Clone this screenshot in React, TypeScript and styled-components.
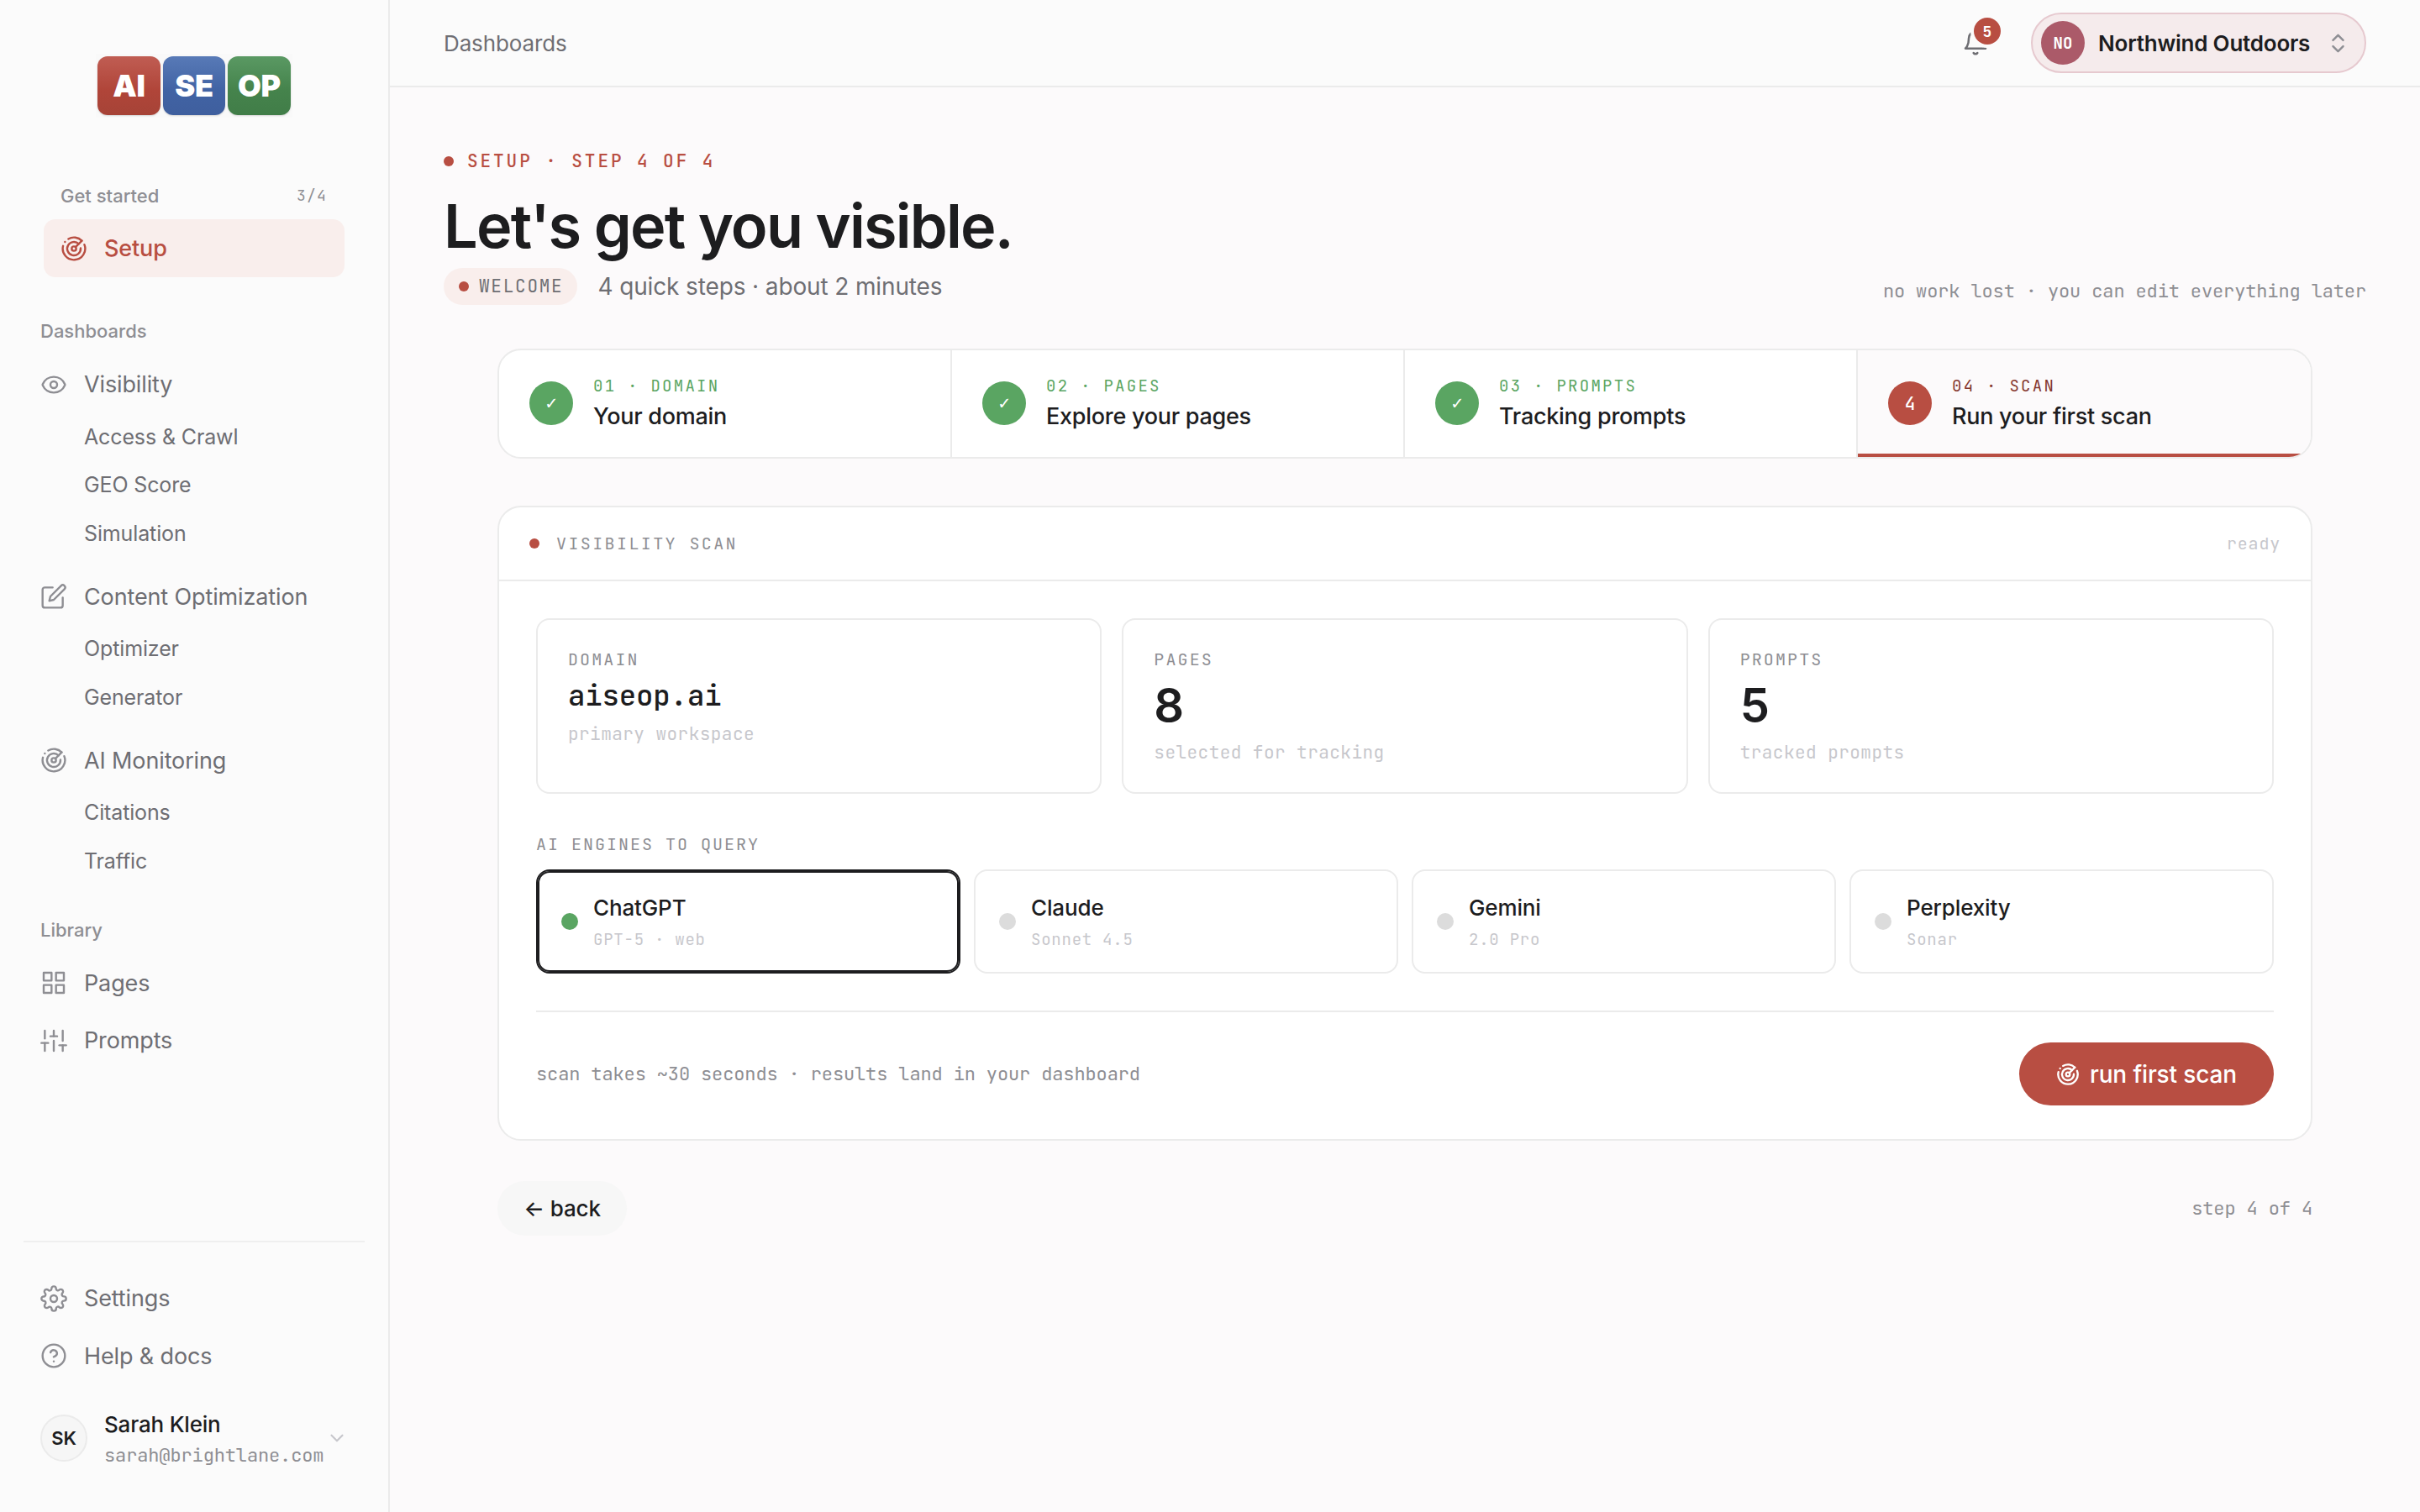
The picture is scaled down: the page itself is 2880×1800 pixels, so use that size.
import React from 'react';
import styled, { createGlobalStyle, css } from 'styled-components';
import { ChevronsUpDown, Eye } from 'lucide-react';
import { FiBell, FiChevronDown, FiEdit, FiGrid, FiHelpCircle, FiSettings, FiSliders } from 'react-icons/fi';

const color = {
  ink: '#1d1d1f',
  text: '#6e6e73',
  muted: '#8e8e93',
  faint: '#c7c7cc',
  line: '#ebebeb',
  chrome: '#fbfbfb',
  canvas: '#fcfafb',
  brand: '#b84e42',
  brandDark: '#86382f',
  brandTint: '#f9eeec',
  green: '#5aa562',
};

const sans = `Inter, 'Liberation Sans', sans-serif`;
const mono = `'JetBrains Mono', 'DejaVu Sans Mono', monospace`;

const GlobalStyle = createGlobalStyle`
  *, *::before, *::after { box-sizing: border-box; }
  html, body { margin: 0; padding: 0; }
  body {
    font-family: ${sans};
    letter-spacing: -0.13px;
    color: ${color.ink};
    background: ${color.canvas};
    -webkit-font-smoothing: antialiased;
  }
  button { font: inherit; letter-spacing: inherit; border: 0; margin: 0; cursor: pointer; }
  h1, p { margin: 0; }
`;

/* Monospaced text: $pitch is the distance from one character to the next. */
const Mono = styled.span<{ $size: number; $pitch: number; $color?: string; $weight?: number; $lh?: number }>`
  display: block;
  font-family: ${mono};
  font-size: ${(p) => p.$size}px;
  font-weight: ${(p) => p.$weight ?? 400};
  letter-spacing: ${(p) => (p.$pitch - p.$size * 0.6).toFixed(3)}px;
  line-height: ${(p) => p.$lh ?? 24}px;
  color: ${(p) => p.$color ?? color.muted};
  white-space: nowrap;
`;

const Dot = styled.span<{ $size?: number; $color?: string }>`
  flex: none;
  width: ${(p) => p.$size ?? 12}px;
  height: ${(p) => p.$size ?? 12}px;
  border-radius: 50%;
  background: ${(p) => p.$color ?? color.brand};
`;

const Shell = styled.div`
  display: grid;
  grid-template-columns: 464px 1fr;
  width: 2880px;
  height: 1800px;
  overflow: hidden;
`;

/* ---------- Sidebar ---------- */

const Sidebar = styled.aside`
  display: flex;
  flex-direction: column;
  background: ${color.chrome};
  border-right: 2px solid ${color.line};
`;

const Logo = styled.div`
  display: flex;
  gap: 3px;
  align-self: flex-start;
  margin: 64px 0 0 114px;
  padding: 2.5px 2px 3.5px 2.2px;
  background: #f9f9f9;
`;

const LogoTile = styled.span<{ $from: string; $mid: string; $to: string }>`
  display: flex;
  align-items: center;
  justify-content: center;
  width: 74.5px;
  height: 70px;
  border-radius: 12px;
  background: linear-gradient(${(p) => p.$from}, ${(p) => p.$mid} 58%, ${(p) => p.$to});
  box-shadow: 0 1px 2px rgba(0, 0, 0, 0.16);
  color: #fff;
  font-size: 36px;
  font-weight: 900;
  letter-spacing: -0.3px;
  line-height: 1;
  padding-top: 1px;
`;

const Started = styled.div`
  display: flex;
  align-items: center;
  justify-content: space-between;
  height: 28px;
  margin: 79px 73px 0 72px;
`;

const SmallLabel = styled.span`
  font-size: 22px;
  font-weight: 500;
  line-height: 28px;
  letter-spacing: 0;
  color: ${color.muted};
`;

const SectionLabel = styled(SmallLabel)<{ $top: number }>`
  display: flex;
  align-items: center;
  height: 57.3px;
  margin-top: ${(p) => p.$top}px;
  padding: 0 0 1px 48px;
`;

const NavItem = styled.a<{ $active?: boolean; $gap?: number }>`
  display: flex;
  align-items: center;
  gap: 20px;
  height: 68.5px;
  margin-top: ${(p) => p.$gap ?? 0}px;
  padding-left: 48px;
  font-size: 27px;
  color: ${color.text};
  white-space: nowrap;

  svg {
    flex: none;
    width: 32px;
    height: 32px;
    color: ${color.muted};
    stroke-width: 1.8;
  }

  ${(p) =>
    p.$active &&
    css`
      height: 69px;
      margin: 14px 52px 0;
      padding-left: 20px;
      border-radius: 14px;
      background: ${color.brandTint};
      color: ${color.brand};
      font-weight: 500;
      svg {
        color: ${color.brand};
      }
    `}
`;

const SubItem = styled.a`
  display: flex;
  align-items: center;
  height: 57.5px;
  padding: 0 0 2px 100px;
  font-size: 25px;
  color: ${color.text};
`;

const SidebarFoot = styled.div`
  margin: auto 28px 0;
  padding: 32.5px 0 56px;
  border-top: 2px solid #efefef;

  ${NavItem} {
    padding-left: 20px;
  }
`;

const User = styled.div`
  display: flex;
  align-items: center;
  height: 64px;
  margin-top: 31.5px;
  padding-left: 20px;

  > svg {
    margin-left: 3px;
    width: 26px;
    height: 26px;
    color: ${color.faint};
  }
`;

const UserAvatar = styled.span`
  display: flex;
  align-items: center;
  justify-content: center;
  width: 56px;
  height: 56px;
  border: 2px solid ${color.line};
  border-radius: 50%;
  background: #f6f6f6;
  font-size: 22px;
  font-weight: 600;
`;

const UserText = styled.div`
  margin-left: 20px;
  padding-top: 2px;
`;

const UserName = styled.div`
  margin-bottom: 3px;
  font-size: 26px;
  font-weight: 500;
  line-height: 36px;
  letter-spacing: -0.2px;
`;

/* ---------- Top bar ---------- */

const Main = styled.main`
  display: flex;
  flex-direction: column;
  min-width: 0;
`;

const TopBar = styled.header`
  display: flex;
  align-items: center;
  height: 104px;
  padding: 0 64px;
  background: ${color.chrome};
  border-bottom: 2px solid ${color.line};
`;

const Crumb = styled.span`
  font-size: 26px;
  color: ${color.text};
  margin-right: auto;
`;

const BellButton = styled.span`
  position: relative;
  display: flex;
  margin-right: 50px;
  color: ${color.text};
`;

const Badge = styled.span`
  position: absolute;
  top: -14px;
  left: 14px;
  display: flex;
  align-items: center;
  justify-content: center;
  width: 32px;
  height: 32px;
  padding-top: 1px;
  border-radius: 50%;
  background: ${color.brand};
  box-shadow: 0 0 0 4px ${color.chrome};
`;

const Workspace = styled.div`
  display: flex;
  align-items: center;
  width: 399px;
  height: 72px;
  padding: 0 17.5px 0 10px;
  border: 2px solid #e6c9cf;
  border-radius: 36px;
  background: #f5ebec;
  font-size: 26px;
  font-weight: 600;
  letter-spacing: -0.22px;

  > svg {
    margin-left: auto;
    color: ${color.muted};
  }
`;

const WorkspaceAvatar = styled.span`
  display: flex;
  align-items: center;
  justify-content: center;
  width: 52px;
  height: 52px;
  margin-right: 16px;
  padding-top: 1px;
  border-radius: 50%;
  background: #ab5a69;
`;

/* ---------- Page heading ---------- */

const Page = styled.div`
  display: flex;
  flex-direction: column;
  padding: 76px 64px 0;
`;

const Eyebrow = styled.div`
  display: flex;
  align-items: center;
  gap: 16px;
  height: 24px;
`;

const Title = styled.h1`
  margin-top: 22px;
  font-size: 72px;
  font-weight: 600;
  line-height: 86px;
  letter-spacing: -1.8px;
`;

const SubRow = styled.div`
  display: flex;
  align-items: center;
  height: 44px;
  margin-top: 7px;
`;

const Welcome = styled.span`
  display: flex;
  align-items: center;
  gap: 12px;
  height: 44px;
  padding: 0 17px 0 18px;
  border-radius: 22px;
  background: ${color.brandTint};
`;

const Lead = styled.p`
  margin-left: 24px;
  font-size: 28px;
  color: ${color.text};
`;

const Note = styled.div`
  margin-left: auto;
  padding-top: 11px;
`;

/* ---------- Stepper ---------- */

const Column = styled.div`
  display: flex;
  flex-direction: column;
  width: 2160px;
  margin: 52px auto 0;
`;

const Stepper = styled.div`
  display: grid;
  grid-template-columns: repeat(4, 1fr);
  height: 131px;
  border: 2px solid ${color.line};
  border-radius: 28px;
  background: #fff;
  overflow: hidden;
`;

const Step = styled.div<{ $active?: boolean }>`
  display: flex;
  align-items: center;
  gap: 24px;
  padding: 0 0 1px 36px;
  border-right: 2px solid ${color.line};
  ${(p) =>
    p.$active &&
    css`
      border-right: 0;
      background: ${color.canvas};
      box-shadow: inset 0 -4px 0 ${color.brand};
    `}
`;

const StepMark = styled.span<{ $active?: boolean }>`
  display: flex;
  align-items: center;
  justify-content: center;
  width: 52px;
  height: 52px;
  border-radius: 50%;
  background: ${(p) => (p.$active ? color.brand : color.green)};
  color: #fff;
  font-family: ${mono};
  font-size: ${(p) => (p.$active ? 21 : 22)}px;
  font-weight: ${(p) => (p.$active ? 500 : 400)};
  line-height: 1;
`;

const StepText = styled.div`
  padding-top: 2px;
`;

const StepTitle = styled.div`
  margin-top: 6px;
  font-size: 27px;
  font-weight: 500;
  line-height: 36px;
  letter-spacing: -0.27px;
  white-space: nowrap;
`;

/* ---------- Scan panel ---------- */

const Panel = styled.section`
  height: 756px;
  margin-top: 56px;
  border: 2px solid ${color.line};
  border-radius: 28px;
  background: #fff;
`;

const PanelHead = styled.div`
  display: flex;
  align-items: center;
  height: 88px;
  padding: 0 36px;
  border-bottom: 2px solid ${color.line};

  ${Dot} {
    margin-right: 20px;
  }
  > :last-child {
    margin-left: auto;
  }
`;

const PanelBody = styled.div`
  padding: 44px 44px 0;
`;

const Stats = styled.div`
  display: grid;
  grid-template-columns: repeat(3, 1fr);
  gap: 24px;
`;

const Stat = styled.div`
  height: 209px;
  padding: 35px 36px 0;
  border: 2px solid ${color.line};
  border-radius: 16px;
`;

const StatNumber = styled.div`
  margin: 11.5px 0 13px;
  font-size: 56px;
  font-weight: 600;
  line-height: 62px;
`;

const StatDomain = styled.div`
  margin: 11px 0 13.5px;
`;

const EnginesLabel = styled.div`
  margin: 48px 0 18px;
`;

const Engines = styled.div`
  display: grid;
  grid-template-columns: repeat(4, 1fr);
  gap: 16px;
`;

const Engine = styled.div<{ $on?: boolean }>`
  display: flex;
  align-items: center;
  gap: 18px;
  height: 124px;
  padding: 0 28px;
  border: 2px solid ${(p) => (p.$on ? color.ink : color.line)};
  border-radius: 16px;
  box-shadow: ${(p) => (p.$on ? `inset 0 0 0 2px ${color.ink}` : 'none')};
`;

const EngineName = styled.div`
  margin-bottom: 8.5px;
  padding-top: 1px;
  font-size: 26px;
  font-weight: 500;
  line-height: 34px;
`;

const PanelFoot = styled.div`
  display: flex;
  align-items: center;
  justify-content: space-between;
  margin-top: 44px;
  padding-top: 36px;
  border-top: 2px solid ${color.line};
`;

const RunButton = styled.button`
  display: flex;
  align-items: center;
  justify-content: center;
  gap: 12px;
  width: 303px;
  height: 75px;
  padding: 0;
  border-radius: 38px;
  background: ${color.brand};
  color: #fff;
  font-size: 28px;
  font-weight: 500;

  svg {
    width: 28px;
    height: 28px;
  }
`;

const BottomRow = styled.div`
  display: flex;
  align-items: center;
  justify-content: space-between;
  margin-top: 48px;
`;

const BackButton = styled.button`
  width: 154px;
  height: 65px;
  padding: 0;
  border-radius: 33px;
  background: #f7f7f7;
  color: ${color.ink};
  font-size: 26px;
  font-weight: 500;
`;

const RadarIcon = () => (
  <svg viewBox="0 0 24 24" fill="none" stroke="currentColor" strokeWidth={2} strokeLinecap="round" strokeLinejoin="round">
    <path d="M19.07 4.93A10 10 0 0 0 6.99 3.34" />
    <path d="M4 6h.01" />
    <path d="M2.29 9.62A10 10 0 1 0 21.31 8.35" />
    <path d="M16.24 7.76A6 6 0 1 0 17.99 11.66" />
    <circle cx="12" cy="12" r="2" />
    <path d="m13.41 10.59 5.66-5.66" />
  </svg>
);

const steps = [
  { tag: '01 · DOMAIN', title: 'Your domain' },
  { tag: '02 · PAGES', title: 'Explore your pages' },
  { tag: '03 · PROMPTS', title: 'Tracking prompts' },
  { tag: '04 · SCAN', title: 'Run your first scan', active: true },
];

const engines = [
  { name: 'ChatGPT', model: 'GPT-5 · web', on: true },
  { name: 'Claude', model: 'Sonnet 4.5' },
  { name: 'Gemini', model: '2.0 Pro' },
  { name: 'Perplexity', model: 'Sonar' },
];

const nav = [
  { icon: <Eye />, label: 'Visibility', children: ['Access & Crawl', 'GEO Score', 'Simulation'] },
  { icon: <FiEdit />, label: 'Content Optimization', children: ['Optimizer', 'Generator'] },
  { icon: <RadarIcon />, label: 'AI Monitoring', children: ['Citations', 'Traffic'] },
];

export default function App() {
  return (
    <>
      <GlobalStyle />
      <Shell>
        <Sidebar>
          <Logo>
            <LogoTile $from="#c05d53" $mid="#b04539" $to="#a64337">AI</LogoTile>
            <LogoTile $from="#587ab7" $mid="#4163a4" $to="#3f5f9e">SE</LogoTile>
            <LogoTile $from="#5a9963" $mid="#45834c" $to="#417d48">OP</LogoTile>
          </Logo>
          <Started>
            <SmallLabel>Get started</SmallLabel>
            <Mono $size={18} $pitch={12}>3/4</Mono>
          </Started>
          <NavItem $active>
            <RadarIcon />
            Setup
          </NavItem>
          <SectionLabel $top={36}>Dashboards</SectionLabel>
          {nav.map((group, i) => (
            <React.Fragment key={group.label}>
              <NavItem $gap={i ? 11.7 : 0}>
                {group.icon}
                {group.label}
              </NavItem>
              {group.children.map((c) => (
                <SubItem key={c}>{c}</SubItem>
              ))}
            </React.Fragment>
          ))}
          <SectionLabel $top={24}>Library</SectionLabel>
          <NavItem>
            <FiGrid />
            Pages
          </NavItem>
          <NavItem>
            <FiSliders />
            Prompts
          </NavItem>
          <SidebarFoot>
            <NavItem>
              <FiSettings />
              Settings
            </NavItem>
            <NavItem>
              <FiHelpCircle />
              Help &amp; docs
            </NavItem>
            <User>
              <UserAvatar>SK</UserAvatar>
              <UserText>
                <UserName>Sarah Klein</UserName>
                <Mono $size={22} $pitch={13.07} $lh={32}>sarah@brightlane.com</Mono>
              </UserText>
              <FiChevronDown />
            </User>
          </SidebarFoot>
        </Sidebar>

        <Main>
          <TopBar>
            <Crumb>Dashboards</Crumb>
            <BellButton>
              <FiBell size={32} strokeWidth={1.9} />
              <Badge>
                <Mono $size={18} $pitch={10.8} $color="#fff" $weight={700}>5</Mono>
              </Badge>
            </BellButton>
            <Workspace>
              <WorkspaceAvatar>
                <Mono $size={19} $pitch={11.4} $color="#fff" $weight={600}>NO</Mono>
              </WorkspaceAvatar>
              Northwind Outdoors
              <ChevronsUpDown size={29} />
            </Workspace>
          </TopBar>

          <Page>
            <Eyebrow>
              <Dot />
              <Mono $size={21} $pitch={15.54} $color={color.brand} $weight={500}>SETUP · STEP 4 OF 4</Mono>
            </Eyebrow>
            <Title>Let's get you visible.</Title>
            <SubRow>
              <Welcome>
                <Dot />
                <Mono $size={21} $pitch={14.35} $color={color.text}>WELCOME</Mono>
              </Welcome>
              <Lead>4 quick steps · about 2 minutes</Lead>
              <Note>
                <Mono $size={22} $pitch={13.07}>no work lost · you can edit everything later</Mono>
              </Note>
            </SubRow>

            <Column>
              <Stepper>
                {steps.map((s) => (
                  <Step key={s.tag} $active={s.active}>
                    <StepMark $active={s.active}>{s.active ? '4' : '✓'}</StepMark>
                    <StepText>
                      <Mono $size={19} $pitch={13.68} $color={s.active ? color.brandDark : color.green}>
                        {s.tag}
                      </Mono>
                      <StepTitle>{s.title}</StepTitle>
                    </StepText>
                  </Step>
                ))}
              </Stepper>

              <Panel>
                <PanelHead>
                  <Dot />
                  <Mono $size={20} $pitch={14.4}>VISIBILITY SCAN</Mono>
                  <Mono $size={20} $pitch={12.8} $color={color.faint}>ready</Mono>
                </PanelHead>
                <PanelBody>
                  <Stats>
                    <Stat>
                      <Mono $size={20} $pitch={14.1}>DOMAIN</Mono>
                      <StatDomain>
                        <Mono $size={34} $pitch={20.27} $color={color.ink} $lh={40} $weight={500}>aiseop.ai</Mono>
                      </StatDomain>
                      <Mono $size={21} $pitch={13.06} $color={color.faint}>primary workspace</Mono>
                    </Stat>
                    <Stat>
                      <Mono $size={20} $pitch={14.1}>PAGES</Mono>
                      <StatNumber>8</StatNumber>
                      <Mono $size={21} $pitch={13.06} $color={color.faint}>selected for tracking</Mono>
                    </Stat>
                    <Stat>
                      <Mono $size={20} $pitch={14.1}>PROMPTS</Mono>
                      <StatNumber>5</StatNumber>
                      <Mono $size={21} $pitch={13.06} $color={color.faint}>tracked prompts</Mono>
                    </Stat>
                  </Stats>
                  <EnginesLabel>
                    <Mono $size={20} $pitch={14}>AI ENGINES TO QUERY</Mono>
                  </EnginesLabel>
                  <Engines>
                    {engines.map((e) => (
                      <Engine key={e.name} $on={e.on}>
                        <Dot $size={20} $color={e.on ? color.green : '#dcdcdc'} />
                        <div>
                          <EngineName>{e.name}</EngineName>
                          <Mono $size={19} $pitch={12.16} $color={color.faint}>{e.model}</Mono>
                        </div>
                      </Engine>
                    ))}
                  </Engines>
                  <PanelFoot>
                    <Mono $size={22} $pitch={13.07}>scan takes ~30 seconds · results land in your dashboard</Mono>
                    <RunButton>
                      <RadarIcon />
                      run first scan
                    </RunButton>
                  </PanelFoot>
                </PanelBody>
              </Panel>

              <BottomRow>
                <BackButton>← back</BackButton>
                <Mono $size={22} $pitch={13.07}>step 4 of 4</Mono>
              </BottomRow>
            </Column>
          </Page>
        </Main>
      </Shell>
    </>
  );
}
